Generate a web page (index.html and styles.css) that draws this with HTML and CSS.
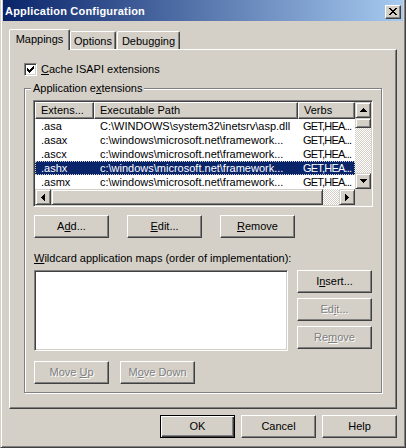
FILE: index.html
```html
<!DOCTYPE html>
<html>
<head>
<meta charset="utf-8">
<title>Application Configuration</title>
<link rel="stylesheet" href="styles.css">
</head>
<body>
<div class="window">
  <div class="titlebar">
    <span class="title">Application Configuration</span>
    <div class="close">
      <svg width="8" height="7" viewBox="0 0 8 7" shape-rendering="crispEdges"><path d="M0 0h2v1h-2z M6 0h2v1h-2z M1 1h2v1h-2z M5 1h2v1h-2z M2 2h4v1h-4z M3 3h2v1h-2z M2 4h4v1h-4z M1 5h2v1h-2z M5 5h2v1h-2z M0 6h2v1h-2z M6 6h2v1h-2z" fill="#000"/></svg>
    </div>
  </div>
  <div class="dlg">
    <div class="tabs">
      <div class="tab tab-sel tab-map">Mappings</div>
      <div class="tab tab-opt">Options</div>
      <div class="tab tab-dbg">Debugging</div>
    </div>
    <div class="panel">
      <div class="check">
        <span class="cbox"><svg width="7" height="7" viewBox="0 0 7 7" shape-rendering="crispEdges"><path d="M6 0h1v1h-1z M5 1h2v1h-2z M0 2h1v1h-1z M4 2h3v1h-3z M0 3h2v1h-2z M3 3h3v1h-3z M0 4h5v1h-5z M1 5h3v1h-3z M2 6h1v1h-1z" fill="#000"/></svg></span>
        <span class="check-label"><u>C</u>ache ISAPI extensions</span>
      </div>
      <div class="group">
        <div class="legend">Application e<u>x</u>tensions</div>
        <div class="listview">
          <div class="lv-main">
            <div class="lv-head">
              <div class="hcell c1">Extens...</div>
              <div class="hcell c2">Executable Path</div>
              <div class="hcell c3">Verbs</div>
            </div>
            <div class="lv-row"><div class="cell c1">.asa</div><div class="cell c2">C:\WINDOWS\system32\inetsrv\asp.dll</div><div class="cell c3">GET,HEA...</div></div>
            <div class="lv-row"><div class="cell c1">.asax</div><div class="cell c2">c:\windows\microsoft.net\framework...</div><div class="cell c3">GET,HEA...</div></div>
            <div class="lv-row"><div class="cell c1">.ascx</div><div class="cell c2">c:\windows\microsoft.net\framework...</div><div class="cell c3">GET,HEA...</div></div>
            <div class="lv-row lv-sel"><div class="cell c1">.ashx</div><div class="cell c2">c:\windows\microsoft.net\framework...</div><div class="cell c3">GET,HEA...</div></div>
            <div class="lv-row"><div class="cell c1">.asmx</div><div class="cell c2">c:\windows\microsoft.net\framework...</div><div class="cell c3">GET,HEA...</div></div>
          </div>
          <div class="vscroll">
            <div class="sb-btn"><svg width="7" height="4" viewBox="0 0 7 4" shape-rendering="crispEdges"><path d="M3 0h1v1h1v1h1v1h1v1h-7v-1h1v-1h1v-1h1z" fill="#000"/></svg></div>
            <div class="sb-thumb v-thumb"></div>
            <div class="sb-track"></div>
            <div class="sb-btn"><svg width="7" height="4" viewBox="0 0 7 4" shape-rendering="crispEdges"><path d="M0 0h7v1h-1v1h-1v1h-1v1h-1v-1h-1v-1h-1v-1h-1z" fill="#000"/></svg></div>
          </div>
          <div class="hscroll">
            <div class="sb-btn"><svg width="4" height="7" viewBox="0 0 4 7" shape-rendering="crispEdges"><path d="M3 0h1v7h-1v-1h-1v-1h-1v-1h-1v-1h1v-1h1v-1h1z" fill="#000"/></svg></div>
            <div class="sb-thumb h-thumb"></div>
            <div class="sb-track"></div>
            <div class="sb-btn"><svg width="4" height="7" viewBox="0 0 4 7" shape-rendering="crispEdges"><path d="M0 0h1v1h1v1h1v1h1v1h-1v1h-1v1h-1v1h-1z" fill="#000"/></svg></div>
          </div>
          <div class="corner"></div>
        </div>
        <div class="btnrow row-main">
          <button class="btn">A<u>d</u>d...</button>
          <button class="btn"><u>E</u>dit...</button>
          <button class="btn"><u>R</u>emove</button>
        </div>
        <div class="wild-label"><u>W</u>ildcard application maps (order of implementation):</div>
        <div class="wild-row">
          <div class="listbox"></div>
          <div class="btncol">
            <button class="btn">I<u>n</u>sert...</button>
            <button class="btn dis">Ed<u>i</u>t...</button>
            <button class="btn dis">Re<u>m</u>ove</button>
          </div>
        </div>
        <div class="btnrow row-move">
          <button class="btn dis">Move <u>U</u>p</button>
          <button class="btn dis">M<u>o</u>ve Down</button>
        </div>
      </div>
    </div>
    <div class="dlg-btns">
      <button class="btn btn-default">OK</button>
      <button class="btn">Cancel</button>
      <button class="btn">Help</button>
    </div>
  </div>
</div>
</body>
</html>
```
FILE: styles.css
```css
* { box-sizing: border-box; }
html, body { margin: 0; padding: 0; }
body {
  width: 406px;
  height: 448px;
  overflow: hidden;
  background: #d4d0c8;
  font: 11px/13px "Liberation Sans", Arial, sans-serif;
  color: #000;
}
.window {
  width: 406px;
  height: 448px;
  display: flex;
  flex-direction: column;
  background: #d4d0c8;
  border-style: solid;
  border-width: 0 1px 1px 1px;
  border-color: #d4d0c8 #404040 #404040 #d4d0c8;
  box-shadow: inset 1px 0 #fff, inset -1px -1px #808080;
  padding: 0 2px 2px 2px;
}
.titlebar {
  height: 21px;
  display: flex;
  align-items: flex-start;
  background: linear-gradient(to right, #0a246a, #a6caf0);
  color: #fff;
}
.title {
  font-weight: bold;
  letter-spacing: 0.2px;
  margin: 5px 0 0 2px;
  white-space: nowrap;
}
.close {
  margin: 5px 2px 0 auto;
  width: 16px;
  height: 14px;
  background: #d4d0c8;
  border: 1px solid;
  border-color: #fff #404040 #404040 #fff;
  box-shadow: inset -1px -1px #808080;
  display: flex;
  align-items: center;
  justify-content: center;
  padding: 0 1px 1px 0;
}
.close svg { display: block; }
.dlg {
  flex: 1;
  display: flex;
  flex-direction: column;
  padding: 8px 6px 0 6px;
}
.tabs {
  display: flex;
  align-items: flex-end;
  height: 20px;
}
.tab {
  height: 18px;
  border: 1px solid;
  border-bottom: none;
  border-color: #fff #404040 transparent #fff;
  box-shadow: inset -1px 0 #808080;
  border-radius: 2px 2px 0 0;
  padding-top: 3px;
  text-align: center;
  white-space: nowrap;
  background: #d4d0c8;
}
.tab-sel {
  height: 21px;
  margin-bottom: -1px;
  position: relative;
  z-index: 1;
}
.tab-map { width: 61px; }
.tab-opt { width: 46px; }
.tab-dbg { width: 63px; margin-left: 1px; }
.panel {
  height: 360px;
  border: 1px solid;
  border-color: #fff #404040 #404040 #fff;
  box-shadow: inset -1px -1px #808080;
  padding: 13px 14px 15px 14px;
  display: flex;
  flex-direction: column;
}
.check {
  display: flex;
  align-items: center;
  height: 13px;
}
.cbox {
  width: 13px;
  height: 13px;
  background: #fff;
  border: 1px solid;
  border-color: #808080 #fff #fff #808080;
  box-shadow: inset 1px 1px #404040, inset -1px -1px #d4d0c8;
  display: flex;
  align-items: center;
  justify-content: center;
}
.cbox svg { display: block; }
.check-label { margin-left: 4px; white-space: nowrap; }
.group {
  margin-top: 12px;
  border: 1px solid #808080;
  box-shadow: inset 1px 1px #fff, 1px 1px #fff;
  padding: 0 8px 8px 8px;
  display: flex;
  flex-direction: column;
}
.legend {
  align-self: flex-start;
  margin: -7px 0 0 -2px;
  padding: 0 2px;
  background: #d4d0c8;
  white-space: nowrap;
}
.listview {
  margin-top: 5px;
  width: 340px;
  height: 107px;
  border: 1px solid;
  border-color: #808080 #fff #fff #808080;
  box-shadow: inset 1px 1px #404040, inset -1px -1px #d4d0c8;
  padding: 1px;
  background: #fff;
  display: grid;
  grid-template-columns: 320px 16px;
  grid-template-rows: 87px 16px;
}
.lv-main { overflow: hidden; }
.lv-head { display: flex; height: 17px; }
.hcell {
  height: 17px;
  border: 1px solid;
  border-color: #fff #404040 #404040 #fff;
  box-shadow: inset -1px -1px #808080;
  background: #d4d0c8;
  padding-left: 5px;
  line-height: 14px;
  white-space: nowrap;
  overflow: hidden;
}
.c1 { width: 59px; flex: none; }
.c2 { width: 204px; flex: none; }
.c3 { width: 57px; flex: none; }
.lv-row { display: flex; height: 14px; line-height: 14px; }
.cell {
  padding-left: 6px;
  white-space: nowrap;
  overflow: hidden;
}
.cell.c3 { letter-spacing: -0.8px; padding-left: 5px; }
.lv-sel {
  background: #0a246a;
  color: #fff;
  outline: 1px dotted #d4d0c8;
  outline-offset: -1px;
}
.vscroll, .hscroll {
  display: flex;
  background: repeating-conic-gradient(#fff 0% 25%, #d4d0c8 0% 50%) 0 0 / 2px 2px;
}
.vscroll { flex-direction: column; }
.sb-btn, .sb-thumb {
  background: #d4d0c8;
  border: 1px solid;
  border-color: #d4d0c8 #404040 #404040 #d4d0c8;
  box-shadow: inset 1px 1px #fff, inset -1px -1px #808080;
}
.sb-btn {
  width: 16px;
  height: 16px;
  flex: none;
  display: flex;
  align-items: center;
  justify-content: center;
}
.sb-btn svg { display: block; }
.v-thumb { height: 10px; flex: none; }
.h-thumb { width: 272px; flex: none; }
.sb-track { flex: 1; }
.corner { background: #d4d0c8; }
.btnrow { display: flex; padding-left: 1px; }
.row-main { margin-top: 8px; gap: 18px; }
.row-move { margin-top: 10px; gap: 11px; }
.btn {
  display: block;
  width: 75px;
  height: 23px;
  flex: none;
  padding: 0 0 1px 0;
  margin: 0;
  font: inherit;
  color: #000;
  background: #d4d0c8;
  border: 1px solid;
  border-color: #fff #404040 #404040 #fff;
  box-shadow: inset -1px -1px #808080;
  border-radius: 0;
  text-align: center;
  white-space: nowrap;
}
.btn.dis {
  color: #808080;
  text-shadow: 1px 1px 0 #fff;
}
.btn-default {
  border-color: #000;
  box-shadow: inset 1px 1px #fff, inset -1px -1px #404040, inset -2px -2px #808080;
}
.wild-label {
  margin-top: 14px;
  padding-left: 1px;
  white-space: nowrap;
}
.wild-row {
  margin-top: 5px;
  display: flex;
  gap: 9px;
  padding-left: 1px;
}
.listbox {
  width: 254px;
  height: 81px;
  background: #fff;
  border: 1px solid;
  border-color: #808080 #fff #fff #808080;
  box-shadow: inset 1px 1px #404040, inset -1px -1px #d4d0c8;
}
.btncol {
  display: flex;
  flex-direction: column;
  gap: 5px;
}
.dlg-btns {
  margin-top: 6px;
  display: flex;
  justify-content: flex-end;
  gap: 6px;
}
```
